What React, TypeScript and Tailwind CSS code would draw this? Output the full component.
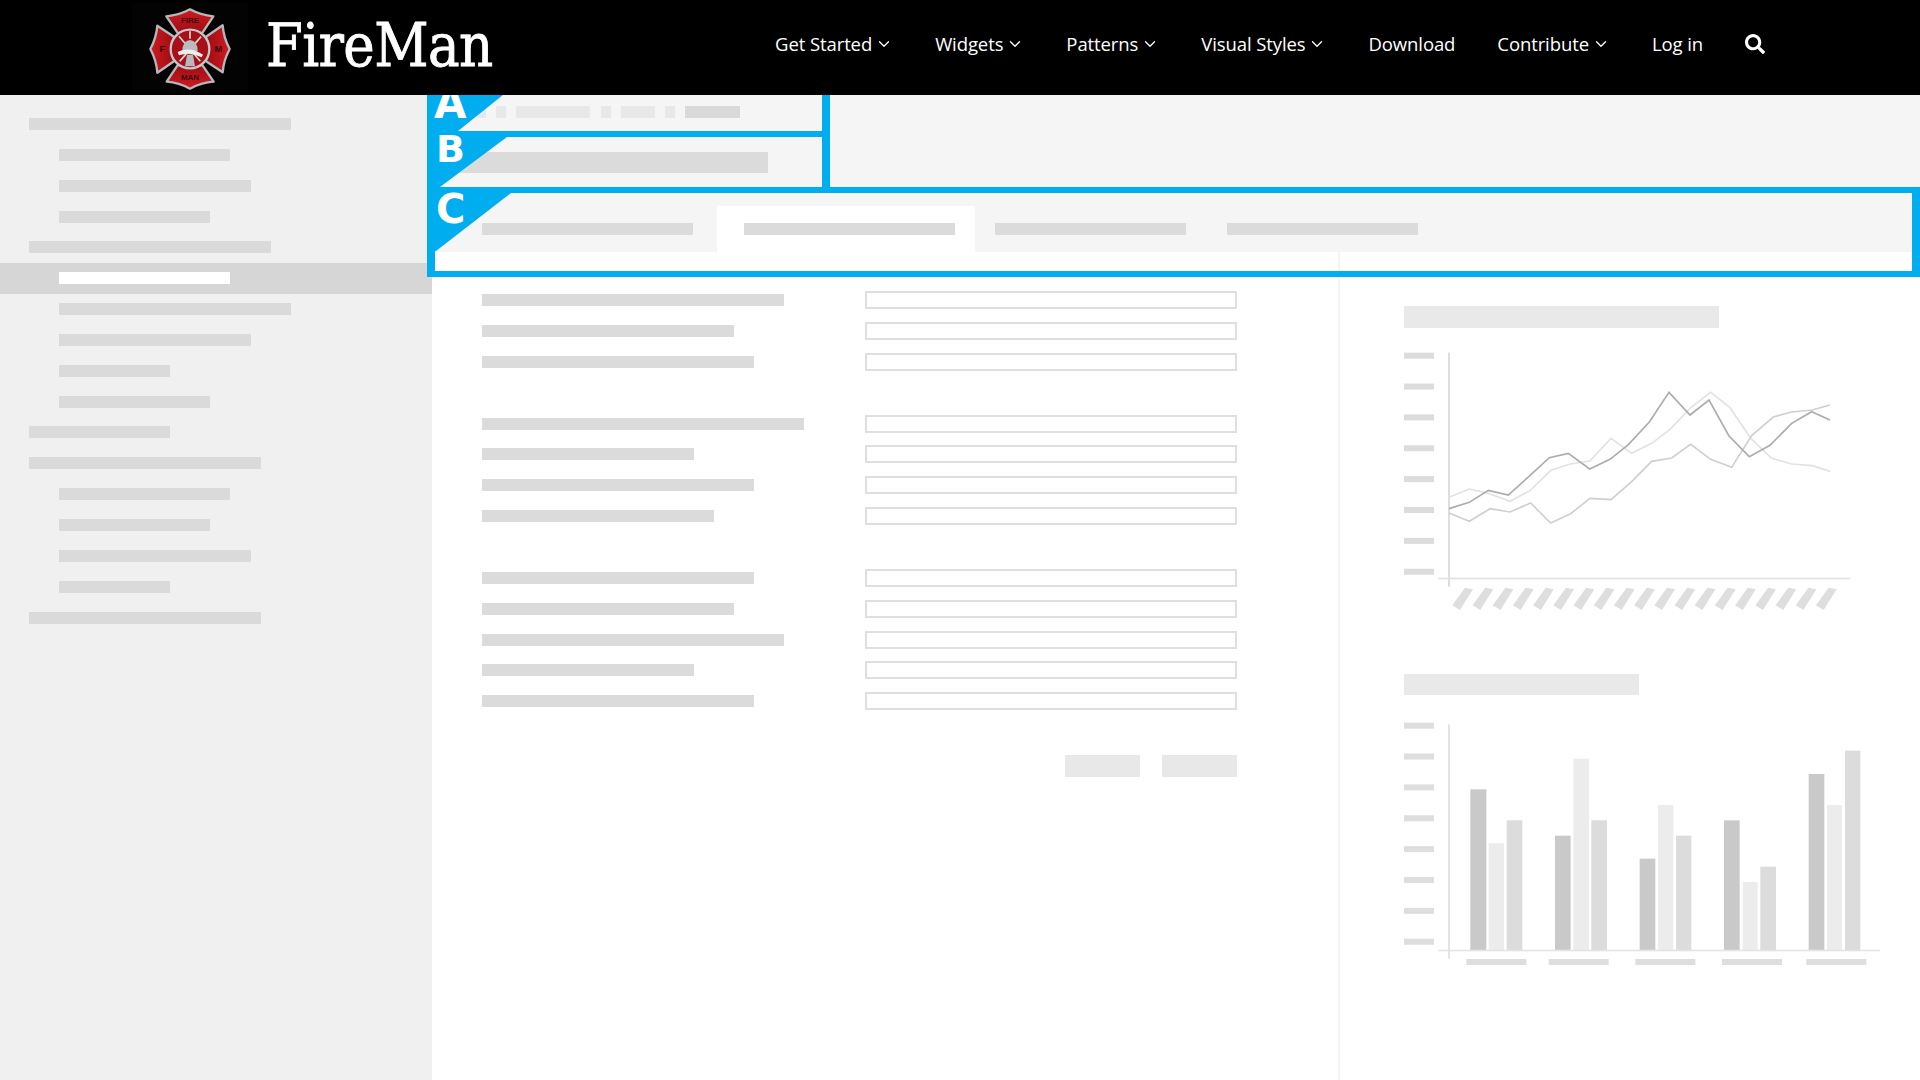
import React from "react";
import { ChevronDown } from "lucide-react";
import { FaSearch } from "react-icons/fa";

const sidebar: [number, number, boolean?][] = [
  [0, 262], [1, 171], [1, 192], [1, 151], [0, 242], [1, 171, true], [1, 232], [1, 192], [1, 111], [1, 151],
  [0, 141], [0, 232], [1, 171], [1, 151], [1, 192], [1, 111], [0, 232],
];

const groups = [
  [302, 252, 272],
  [322, 212, 272, 232],
  [272, 252, 302, 212, 272],
];

const nav: [string, boolean][] = [
  ["Get Started", true], ["Widgets", true], ["Patterns", true], ["Visual Styles", true],
  ["Download", false], ["Contribute", true], ["Log in", false],
];

const toPts = (p: number[][]) => p.map((q) => q.join(",")).join(" ");
const l1 = [[207,656],[268,637],[325,601],[385,615],[447,559],[508,503],[565,490],[629,537],[690,508],[745,464],[808,396],[867,307],[930,375],[987,330],[1047,438],[1108,500],[1170,466],[1235,400],[1295,365],[1350,390]];
const l2 = [[207,622],[268,597],[325,610],[390,634],[450,602],[513,541],[570,522],[630,513],[693,445],[755,490],[815,460],[870,418],[930,355],[992,307],[1050,353],[1112,445],[1175,505],[1235,522],[1297,527],[1350,544]];
const l3 = [[207,669],[268,694],[330,656],[390,666],[452,639],[512,699],[572,671],[630,625],[693,629],[755,575],[815,514],[875,504],[932,463],[992,508],[1055,532],[1115,437],[1180,381],[1235,366],[1297,360],[1350,345]];

const ticks = [0, 1, 2, 3, 4, 5, 6, 7];

function LineChart() {
  return (
    <svg width="476" height="290" viewBox="72 150 1428 870" className="block">
      {ticks.map((i) => (
        <rect key={i} x="72" y={188 + i * 92.6} width="90" height="18" fill="#dcdcdc" />
      ))}
      <rect x="204" y="188" width="6" height="702" fill="#dedede" />
      <rect x="175" y="863" width="1236" height="5" fill="#e2e2e2" />
      <polyline points={toPts(l2)} fill="none" stroke="#e2e2e2" strokeWidth="5" />
      <polyline points={toPts(l3)} fill="none" stroke="#cfcfcf" strokeWidth="5" />
      <polyline points={toPts(l1)} fill="none" stroke="#acacac" strokeWidth="5" />
      {Array.from({ length: 19 }).map((_, i) => (
        <polygon
          key={i}
          points={`${217 + i * 60.6},${946} ${255 + i * 60.6},${893} ${279 + i * 60.6},${898} ${240 + i * 60.6},${960}`}
          fill="#dedede"
        />
      ))}
    </svg>
  );
}

const barGroups: [number, number, number, number][][] = [
  [[271, 319, 388, 0], [326, 372, 550, 1], [380, 427, 481, 2]],
  [[525, 572, 527, 0], [580, 627, 296, 1], [634, 681, 481, 2]],
  [[779, 826, 596, 0], [834, 880, 435, 1], [888, 934, 527, 2]],
  [[1032, 1079, 481, 0], [1088, 1133, 666, 1], [1141, 1188, 620, 2]],
  [[1286, 1333, 342, 0], [1341, 1386, 435, 1], [1395, 1441, 272, 2]],
];
const barColors = ["#c9c9c9", "#ececec", "#dcdcdc"];

function BarChart() {
  return (
    <svg width="476" height="270" viewBox="72 135 1428 810" className="block">
      {ticks.map((i) => (
        <rect key={i} x="72" y={188 + i * 92.6} width="90" height="18" fill="#dedede" />
      ))}
      <rect x="204" y="193" width="6" height="703" fill="#e4e4e4" />
      {barGroups.flat().map(([a, b, top, c], i) => (
        <rect key={i} x={a} y={top} width={b - a} height={872 - top} fill={barColors[c]} />
      ))}
      <rect x="175" y="869" width="1325" height="5" fill="#e4e4e4" />
      {[259, 506, 766, 1026, 1279].map((x) => (
        <rect key={x} x={x} y="897" width="180" height="18" fill="#dedede" />
      ))}
    </svg>
  );
}

function Logo() {
  const arm = "M112 45 Q150 42 183 24 Q216 42 253 45 L219 96 Q183 78 147 96 Z";
  return (
    <svg width="90" height="90" viewBox="48 5 270 270" className="block">
      <defs>
        <linearGradient id="red" x1="0" y1="0" x2="0" y2="1">
          <stop offset="0" stopColor="#d01a20" />
          <stop offset="1" stopColor="#9c0d14" />
        </linearGradient>
      </defs>
      {[0, 90, 180, 270].map((r) => (
        <g key={r} transform={`rotate(${r} 183 143)`}>
          <path d={arm} fill="url(#red)" stroke="#b4b7bb" strokeWidth="7" strokeLinejoin="round" />
        </g>
      ))}
      <circle cx="183" cy="143" r="58" fill="#a80f17" stroke="#c4c6c9" strokeWidth="7" />
      <g stroke="#d8d8d8" strokeWidth="5" fill="none">
        <path d="M150 105 L214 180" />
        <path d="M216 106 L152 180" />
        <path d="M183 90 L183 112" />
      </g>
      <path d="M160 150 Q160 118 183 116 Q206 118 206 150 Z" fill="#b9bbbe" />
      <path d="M146 152 Q183 134 222 160 L218 168 Q183 150 150 162 Z" fill="#eceded" />
      <path d="M174 160 L192 160 L198 195 L168 195 Z" fill="#b6b8bb" />
      <g fill="#3f0a0c" fontFamily="'Liberation Sans', sans-serif" fontWeight="700" textAnchor="middle">
        <text x="183" y="66" fontSize="24">FIRE</text>
        <text x="183" y="236" fontSize="24">MAN</text>
        <text x="100" y="152" fontSize="28">F</text>
        <text x="268" y="152" fontSize="28">M</text>
      </g>
    </svg>
  );
}

export default function App() {
  return (
    <div className="relative flex h-[1080px] w-[1920px] flex-col overflow-hidden bg-white [font-family:'Open_Sans',sans-serif]">
      <header className="relative z-10 flex h-[95px] shrink-0 items-center bg-black">
        <div className="ml-[132px] flex h-[89px] w-[116px] items-center justify-center bg-[#030303]">
          <Logo />
        </div>
        <div className="ml-[18px] mb-[4px] text-[59px] leading-none tracking-[-0.6px] text-white [-webkit-text-stroke:0.8px_white] [font-family:'DejaVu_Serif',serif] [font-stretch:condensed]">
          FireMan
        </div>
        <nav className="ml-auto mb-[7px] mr-[155px] flex items-center gap-[42px] text-[18.5px] tracking-[-0.1px] text-white">
          {nav.map(([t, c]) => (
            <div key={t} className="flex items-center">
              <span>{t}</span>
              {c && <ChevronDown size={18} strokeWidth={1.75} className="ml-[3px]" />}
            </div>
          ))}
          <FaSearch size={20} />
        </nav>
      </header>

      <div className="flex flex-1">
        <aside className="w-[432px] shrink-0 bg-[#f0f0f0] pt-[13.6px]">
          {sidebar.map(([lvl, w, active], i) => (
            <div
              key={i}
              className={`flex h-[30.85px] items-center ${lvl ? "pl-[59px]" : "pl-[29px]"} ${active ? "bg-[#d6d6d6]" : ""}`}
            >
              <div className={`h-[12px] ${active ? "bg-white" : "bg-[#dadada]"}`} style={{ width: w }} />
            </div>
          ))}
        </aside>

        <main className="flex min-w-0 flex-1 flex-col">
          <div className="h-[157px] shrink-0 bg-[#f5f5f5] pt-[11px]">
            <div className="flex h-[12px] pl-[45px]">
              <div className="h-full w-[9px] bg-[#e8e8e8]" />
              <div className="ml-[10px] h-full w-[10px] bg-[#e8e8e8]" />
              <div className="ml-[10px] h-full w-[74px] bg-[#e8e8e8]" />
              <div className="ml-[11px] h-full w-[10px] bg-[#e8e8e8]" />
              <div className="ml-[10px] h-full w-[34px] bg-[#e8e8e8]" />
              <div className="ml-[10px] h-full w-[10px] bg-[#e8e8e8]" />
              <div className="ml-[10px] h-full w-[55px] bg-[#d9d9d9]" />
            </div>
            <div className="ml-[28px] mt-[34px] h-[21px] w-[308px] bg-[#dbdbdb]" />
            <div className="mt-[33px] flex h-[46px]">
              <div className="w-[285px] pl-[50px] pt-[17px]">
                <div className="h-[12px] w-[211px] bg-[#dbdbdb]" />
              </div>
              <div className="w-[258px] bg-white pl-[27px] pt-[17px]">
                <div className="h-[12px] w-[211px] bg-[#dbdbdb]" />
              </div>
              <div className="ml-[20px] pt-[17px]">
                <div className="h-[12px] w-[191px] bg-[#dbdbdb]" />
              </div>
              <div className="ml-[41px] pt-[17px]">
                <div className="h-[12px] w-[191px] bg-[#dbdbdb]" />
              </div>
            </div>
          </div>

          <div className="flex flex-1">
            <section className="w-[908px] shrink-0 border-r-2 border-[#f3f3f3] pl-[50px] pt-[32.8px]">
              {groups.map((g, gi) => (
                <div key={gi} className="mb-[30.85px]">
                  {g.map((w, i) => (
                    <div key={i} className="flex h-[30.85px] items-center">
                      <div className="w-[383px]">
                        <div className="h-[12px] bg-[#dbdbdb]" style={{ width: w }} />
                      </div>
                      <div className="h-[18px] w-[372px] border-2 border-[#dfdfdf] bg-white" />
                    </div>
                  ))}
                </div>
              ))}
              <div className="ml-[583px] mt-[38px] flex w-[172px] justify-between">
                <div className="h-[22px] w-[75px] bg-[#e8e8e8]" />
                <div className="h-[22px] w-[75px] bg-[#e8e8e8]" />
              </div>
            </section>

            <section className="flex-1 pl-[64px] pt-[54px]">
              <div className="h-[22px] w-[315px] bg-[#e9e9e9]" />
              <div className="mt-[12px]">
                <LineChart />
              </div>
              <div className="mt-[44px] h-[21px] w-[235px] bg-[#e9e9e9]" />
              <div className="mt-[10px]">
                <BarChart />
              </div>
            </section>
          </div>
        </main>
      </div>

      {/* Annotation overlay */}
      <div className="pointer-events-none absolute left-[427px] right-0 top-[95px] h-[182px] overflow-hidden">
        <div className="h-[42px] w-[403px] border-b-[6px] border-r-8 border-[#00adef]" />
        <div className="h-[50px] w-[403px] border-r-8 border-[#00adef]" />
        <div className="h-[90px] border-y-[6px] border-x-[8px] border-[#00adef]" />
        <div className="absolute inset-0 bg-[#00adef] [clip-path:polygon(0_0,76px_0,31px_36px,0_36px)]" />
        <div className="absolute inset-0 bg-[#00adef] [clip-path:polygon(0_36px,8px_36px,8px_42px,0_42px)]" />
        <div className="absolute inset-0 bg-[#00adef] [clip-path:polygon(0_42px,80px_42px,13px_92px,0_92px)]" />
        <div className="absolute inset-0 bg-[#00adef] [clip-path:polygon(0_92px,84px_98px,9px_156px,0_156px)]" />
        <span className="absolute left-[7px] top-[-12.5px] text-[42px] font-bold leading-none text-white [font-family:'DejaVu_Sans',sans-serif]">A</span>
        <span className="absolute left-[9px] top-[35px] text-[38px] font-bold leading-none text-white [font-family:'DejaVu_Sans',sans-serif]">B</span>
        <span className="absolute left-[9px] top-[94px] text-[40px] font-bold leading-none text-white [font-family:'DejaVu_Sans',sans-serif]">C</span>
      </div>
    </div>
  );
}
